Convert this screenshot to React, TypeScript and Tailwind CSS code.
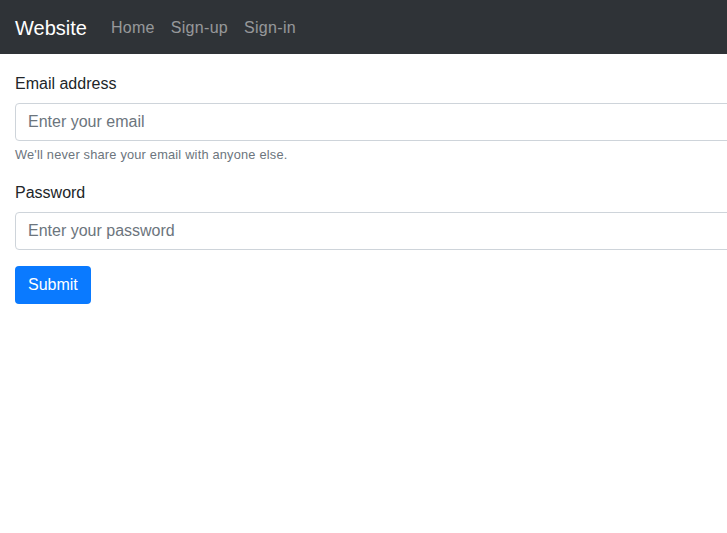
export default function App() {
  return (
    <div className="min-h-screen overflow-hidden bg-white font-['Liberation_Sans',Arial,sans-serif] text-[#212529]">
      {/* Navbar */}
      <nav className="flex h-[54px] items-center bg-[#2f3337] px-[15px] pt-[2px]">
        <a href="#" className="mr-[16px] text-[20px] leading-[30px] text-white">
          Website
        </a>
        <div className="flex">
          {["Home", "Sign-up", "Sign-in"].map((item) => (
            <a
              key={item}
              href="#"
              className="px-[8px] text-[16px] leading-[24px] tracking-[0.3px] text-white/50"
            >
              {item}
            </a>
          ))}
        </div>
      </nav>

      {/* Form */}
      <form className="w-[1000px] px-[15px] pt-[17px]">
        <div className="mb-[16px]">
          <label className="mb-[7px] block pt-[1px] text-[16px] leading-[24px]">Email address</label>
          <input
            type="email"
            placeholder="Enter your email"
            className="block h-[38px] w-full rounded-[4px] border border-[#ced4da] px-[12px] text-[16px] outline-none placeholder:text-[#6c757d]"
          />
          <small className="mt-[4px] block text-[12.8px] leading-[19px] tracking-[0.2px] text-[#6c757d]">
            We'll never share your email with anyone else.
          </small>
        </div>
        <div className="mb-[16px]">
          <label className="mb-[7px] block pt-[1px] text-[16px] leading-[24px]">Password</label>
          <input
            type="password"
            placeholder="Enter your password"
            className="block h-[38px] w-full rounded-[4px] border border-[#ced4da] px-[12px] text-[16px] outline-none placeholder:text-[#6c757d]"
          />
        </div>
        <button
          type="submit"
          className="h-[38px] rounded-[4px] bg-[#0a7aff] px-[13px] text-[16px] text-white"
        >
          Submit
        </button>
      </form>
    </div>
  );
}
